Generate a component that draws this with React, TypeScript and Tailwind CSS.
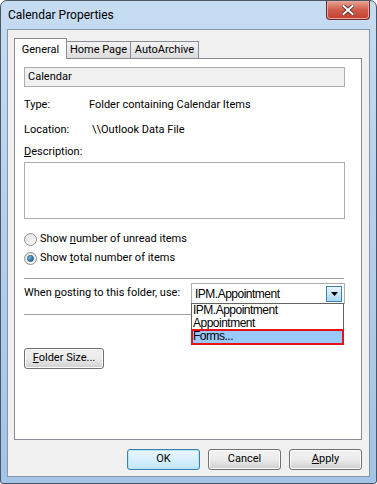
import React from "react";

const ui = { fontFamily: 'Roboto, "Noto Sans", sans-serif' };
const listFont = { fontFamily: '"Liberation Sans", Arial, sans-serif', letterSpacing: "-0.5px" };

const Radio = ({ checked }: { checked?: boolean }) => (
  <span className="relative w-[13px] h-[13px] rounded-full border border-[#8e8f8f] bg-gradient-to-br from-[#e0e0e0] to-[#fbfbfb] flex items-center justify-center shrink-0">
    {checked && (
      <span className="w-[7px] h-[7px] rounded-full bg-gradient-to-br from-[#8ad1f4] to-[#0d5a8c] border border-[#1c5c82]" />
    )}
  </span>
);

const Button = ({
  children,
  primary,
  className = "",
}: {
  children: React.ReactNode;
  primary?: boolean;
  className?: string;
}) => (
  <div
    className={`h-[21px] rounded-[3px] border flex items-center justify-center text-black ${
      primary
        ? "border-[#3c7fb1] bg-gradient-to-b from-[#eaf6fd] via-[#d9f0fc] to-[#bee6fd] shadow-[inset_0_0_0_1px_#b7e3f9]"
        : "border-[#707070] bg-gradient-to-b from-[#f2f2f2] via-[#ebebeb] to-[#cfcfcf] shadow-[inset_0_0_0_1px_#fcfcfc]"
    } ${className}`}
  >
    {children}
  </div>
);

export default function App() {
  return (
    <div className="w-[377px] h-[484px] bg-white" style={ui}>
      <div className="w-[377px] h-[484px] rounded-t-[7px] rounded-b-[3px] border border-[#4a5663] bg-gradient-to-b from-[#c6dcf2] via-[#b3cfec] to-[#a4c4e6] flex flex-col">
        {/* Title bar */}
        <div className="h-[28px] flex items-start justify-between shrink-0">
          <span className="pl-[7px] pt-[6px] text-[12px] text-black leading-[16px]">Calendar Properties</span>
          <div className="mr-[6px] w-[44px] h-[19px] rounded-b-[4px] border border-t-0 border-[#6b2b2b] bg-gradient-to-b from-[#e5a392] via-[#cf5a4a] to-[#c4402f] flex items-center justify-center shadow-[inset_0_0_0_1px_#e9a79b]">
            <svg width="12" height="10" viewBox="0 0 12 10">
              <path d="M1.5 1 L10.5 9 M10.5 1 L1.5 9" stroke="#3d2b2b" strokeWidth="3.6" strokeLinecap="square" />
              <path d="M1.5 1 L10.5 9 M10.5 1 L1.5 9" stroke="#ffffff" strokeWidth="2" strokeLinecap="square" />
            </svg>
          </div>
        </div>

        {/* Client area */}
        <div className="mx-[6px] h-[448px] border border-[#8795a8] bg-[#f0f0f0] flex flex-col text-[11px] text-black whitespace-nowrap">
          {/* Tabs */}
          <div className="flex items-end pl-[6px] pt-[8px] h-[28px]">
            <div className="relative z-10 w-[53px] h-[21px] pt-[3px] border border-b-0 border-[#898c95] bg-white flex justify-center items-start -mb-px">
              General
            </div>
            <div className="w-[64px] h-[17px] border border-l-0 border-b-0 border-[#898c95] bg-gradient-to-b from-[#f2f2f2] to-[#dcdcdc] flex items-center justify-center">
              Home Page
            </div>
            <div className="w-[68px] h-[17px] border border-l-0 border-b-0 border-[#898c95] bg-gradient-to-b from-[#f2f2f2] to-[#dcdcdc] flex items-center justify-center">
              AutoArchive
            </div>
          </div>

          {/* Panel */}
          <div className="ml-[6px] w-[348px] h-[382px] border border-[#898c95] bg-white px-[9px] pt-[8px] flex flex-col">
            <div className="w-[321px] h-[20px] border border-[#abadb3] bg-[#f0f0f0] flex items-center px-[3px]">
              Calendar
            </div>

            <div className="mt-[10px] flex items-center h-[16px]">
              <span className="w-[65px]">Type:</span>
              <span>Folder containing Calendar Items</span>
            </div>
            <div className="mt-[9px] flex items-center h-[16px]">
              <span className="w-[68px]">Location:</span>
              <span>\\Outlook Data File</span>
            </div>
            <div className="mt-[6px] h-[16px] flex items-center">
              <span>
                <span className="underline">D</span>escription:
              </span>
            </div>
            <div className="mt-[2px] w-[321px] h-[57px] border border-[#abadb3] bg-white" />

            <div className="mt-[12px] flex items-center gap-[3px] h-[16px]">
              <Radio />
              <span>
                Show <span className="underline">n</span>umber of unread items
              </span>
            </div>
            <div className="mt-[3px] flex items-center gap-[3px] h-[16px]">
              <Radio checked />
              <span>
                Show <span className="underline">t</span>otal number of items
              </span>
            </div>

            <div className="mt-[12px] w-[320px] h-px bg-[#a0a0a0]" />

            <div className="relative mt-[4px] flex items-center h-[21px]">
              <span className="w-[167px]">
                When <span className="underline">p</span>osting to this folder, use:
              </span>
              <div className="w-[154px] h-[21px] border border-[#abadb3] bg-white flex items-center justify-between pl-[3px] pr-[2px]">
                <span className="text-[12px]" style={listFont}>
                  IPM.Appointment
                </span>
                <div className="w-[16px] h-[16px] border border-[#3c7fb1] bg-gradient-to-b from-[#eaf6fd] to-[#a7d9f5] flex items-center justify-center">
                  <svg width="7" height="4" viewBox="0 0 7 4">
                    <path d="M0 0 H7 L3.5 4 Z" fill="#000" />
                  </svg>
                </div>
              </div>

              {/* Dropdown list */}
              <div
                className="absolute left-[167px] top-[20px] z-20 w-[153px] border border-[#646464] bg-white flex flex-col text-[12px] leading-[13px]"
                style={listFont}
              >
                <div className="h-[13px] px-[1px]">IPM.Appointment</div>
                <div className="h-[13px] px-[1px]">Appointment</div>
                <div className="h-[14px] px-[1px] bg-[#99c9ff] outline outline-2 outline-[#e8101a] -outline-offset-1">
                  Forms...
                </div>
              </div>
            </div>

            <div className="mt-[10px] w-[167px] h-px bg-[#a0a0a0]" />

            <Button className="mt-[33px] w-[80px]">
              <span>
                <span className="underline">F</span>older Size...
              </span>
            </Button>
          </div>

          {/* Bottom buttons */}
          <div className="mt-[9px] flex justify-end gap-[8px] pr-[7px]">
            <Button primary className="w-[73px]">
              OK
            </Button>
            <Button className="w-[73px]">Cancel</Button>
            <Button className="w-[73px]">
              <span>
                <span className="underline">A</span>pply
              </span>
            </Button>
          </div>
        </div>
      </div>
    </div>
  );
}
